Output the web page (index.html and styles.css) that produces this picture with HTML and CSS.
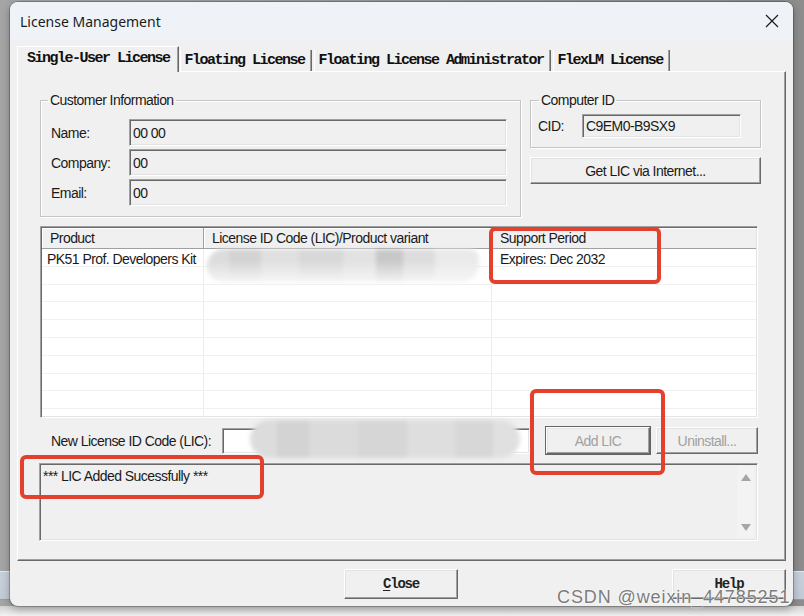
FILE: index.html
```html
<!DOCTYPE html>
<html lang="en">
<head>
    <meta charset="UTF-8">
    <meta name="viewport" content="width=device-width, initial-scale=1.0">
    <title>License Management</title>
    <link rel="stylesheet" href="styles.css">
</head>
<body>
    <div class="dialog">
        <div class="titlebar">
            <span class="title">License Management</span>
            <svg class="close-x" width="14" height="14" viewBox="0 0 14 14">
                <path d="M1 1L13 13M13 1L1 13" stroke="#1b1b1b" stroke-width="1.2" fill="none"/>
            </svg>
        </div>

        <div class="tabs">
            <div class="tab active">Single-User License</div>
            <div class="tab">Floating License</div>
            <div class="tab">Floating License Administrator</div>
            <div class="tab">FlexLM License</div>
        </div>

        <div class="panel">
            <div class="top">
                <fieldset class="group customer">
                    <legend>Customer Information</legend>
                    <div class="fields">
                        <label>Name:</label><div class="edit">00 00</div>
                        <label>Company:</label><div class="edit">00</div>
                        <label>Email:</label><div class="edit">00</div>
                    </div>
                </fieldset>
                <div class="side">
                    <fieldset class="group cid">
                        <legend>Computer ID</legend>
                        <div class="cid-row">
                            <label>CID:</label><div class="edit">C9EM0-B9SX9</div>
                        </div>
                    </fieldset>
                    <div class="btn wide">Get LIC via Internet...</div>
                </div>
            </div>

            <div class="listview">
                <div class="lv-head">
                    <div class="col c1">Product</div>
                    <div class="col c2">License ID Code (LIC)/Product variant</div>
                    <div class="col c3">Support Period</div>
                </div>
                <div class="lv-row">
                    <div class="col c1">PK51 Prof. Developers Kit</div>
                    <div class="col c2"></div>
                    <div class="col c3">Expires: Dec 2032</div>
                </div>
                <div class="lv-row"><div class="col c1"></div><div class="col c2"></div><div class="col c3"></div></div>
                <div class="lv-row"><div class="col c1"></div><div class="col c2"></div><div class="col c3"></div></div>
                <div class="lv-row"><div class="col c1"></div><div class="col c2"></div><div class="col c3"></div></div>
                <div class="lv-row"><div class="col c1"></div><div class="col c2"></div><div class="col c3"></div></div>
                <div class="lv-row"><div class="col c1"></div><div class="col c2"></div><div class="col c3"></div></div>
                <div class="lv-row"><div class="col c1"></div><div class="col c2"></div><div class="col c3"></div></div>
                <div class="lv-row"><div class="col c1"></div><div class="col c2"></div><div class="col c3"></div></div>
                <div class="lv-row"><div class="col c1"></div><div class="col c2"></div><div class="col c3"></div></div>
                <div class="lv-row"><div class="col c1"></div><div class="col c2"></div><div class="col c3"></div></div>
            </div>

            <div class="lic-row">
                <label class="lic-label">New License ID Code (LIC):</label>
                <div class="edit white lic-input"></div>
                <div class="btn default disabled add">Add LIC</div>
                <div class="btn disabled uninstall">Uninstall...</div>
            </div>

            <div class="output">
                <div class="output-text">*** LIC Added Sucessfully ***</div>
                <div class="vscroll">
                    <span class="arrow up"></span>
                    <span class="arrow down"></span>
                </div>
            </div>
        </div>

        <div class="footer">
            <div class="btn mono"><u>C</u>lose</div>
            <div class="btn mono">Help</div>
        </div>
    </div>

    <!-- redactions and annotations drawn over the screenshot -->
    <div class="smear smear-list"></div>
    <div class="smear smear-input"></div>
    <div class="mark mark-period"></div>
    <div class="mark mark-add"></div>
    <div class="mark mark-msg"></div>
    <div class="watermark">CSDN @weixin_44785251</div>
</body>
</html>
```

FILE: styles.css
```css
html, body {
    margin: 0;
}
body {
    width: 804px;
    height: 616px;
    padding-top: 2px;
    box-sizing: border-box;
    overflow: hidden;
    background:
        linear-gradient(transparent 606px, #d2d2d2 606px, #f2f2f2 616px),
        linear-gradient(transparent 571px, #e9e9e9 571px, #e9e9e9 572px, #c8d0dc 572px, #c2cad6 599px, #9c9c9c 599px, #9c9c9c 600px, transparent 600px),
        linear-gradient(90deg, #a5a5a5, #8d8d8d);
    font-family: 'Liberation Sans', Arial, sans-serif;
    font-size: 14px;
    letter-spacing: -0.55px;
    color: #1a1a1a;
    position: relative;
}

.dialog {
    width: 783px;
    height: 604px;
    margin-left: 10px;
    background-color: #f0f0f0;
    border-radius: 8px;
    overflow: hidden;
    box-shadow: 0 0 0 1px rgba(0, 0, 0, 0.22), 0 3px 8px rgba(0, 0, 0, 0.3);
    display: flex;
    flex-direction: column;
}

.titlebar {
    height: 38px;
    flex: none;
    background-color: #eff3f8;
    display: flex;
    align-items: center;
    justify-content: space-between;
    padding: 0 14px 0 10px;
    font-family: 'Noto Sans', 'Open Sans', sans-serif;
    font-size: 14px;
    letter-spacing: 0;
    color: #1b1b1b;
}

/* tab strip */
.tabs {
    display: flex;
    align-items: flex-end;
    height: 25px;
    margin: 6px 7px 0;
    flex: none;
}
.tab {
    font-family: 'Liberation Mono', monospace;
    font-weight: bold;
    font-size: 15px;
    letter-spacing: -1.5px;
    height: 21px;
    line-height: 22px;
    padding: 0 6px 0 4px;
    margin-left: 2px;
    border-left: 1px solid #fff;
    border-right: 1px solid #696969;
    box-shadow: inset -1px 0 #a0a0a0;
    color: #111;
    white-space: nowrap;
}
.tab.active {
    height: 25px;
    line-height: 24px;
    margin-left: 0;
    margin-bottom: -1px;
    padding: 0 8px 0 9px;
    border-top: 1px solid #fff;
    background-color: #f0f0f0;
    position: relative;
    z-index: 1;
}
.tab.active + .tab {
    margin-left: 1px;
}

.panel {
    height: 490px;
    margin: 0 7px;
    flex: none;
    box-sizing: border-box;
    padding: 20px 24px 0 22px;
    border-top: 1px solid #fff;
    border-left: 1px solid #fff;
    border-right: 1px solid #696969;
    border-bottom: 1px solid #696969;
    box-shadow: inset -1px -1px #a0a0a0;
}

.top {
    display: flex;
    gap: 9px;
}

.group {
    margin: 0;
    border: 1px solid #c4c4c4;
    box-shadow: inset 1px 1px #fff, 1px 1px #fff;
    box-sizing: border-box;
    min-width: 0;
}
.group legend {
    padding: 0 2px;
    line-height: 16px;
}

.customer {
    width: 481px;
    padding: 11px 13px 10px 10px;
}
.customer legend {
    margin-left: -3px;
}
.fields {
    display: grid;
    grid-template-columns: 78px 1fr;
    grid-auto-rows: 27px;
    row-gap: 3px;
    align-items: center;
}

.side {
    width: 231px;
}
.cid {
    padding: 6px 19px 9px 7px;
}
.cid legend {
    margin-left: 1px;
}
.cid-row {
    display: flex;
    align-items: center;
}
.cid-row label {
    width: 44px;
}
.cid-row .edit {
    flex: 1;
    height: 24px;
}

/* sunken edit box */
.edit {
    height: 27px;
    box-sizing: border-box;
    border-top: 1px solid #a0a0a0;
    border-left: 1px solid #a0a0a0;
    border-right: 1px solid #fff;
    border-bottom: 1px solid #fff;
    box-shadow: inset 1px 1px #696969, inset -1px -1px #e3e3e3;
    padding: 0 3px;
    display: flex;
    align-items: center;
    background-color: #f0f0f0;
}
.edit.white {
    background-color: #fff;
}

/* raised button */
.btn {
    box-sizing: border-box;
    height: 27px;
    border-top: 1px solid #fff;
    border-left: 1px solid #fff;
    border-right: 1px solid #696969;
    border-bottom: 1px solid #696969;
    box-shadow: inset -1px -1px #a0a0a0, inset 1px 1px #e3e3e3;
    background-color: #f0f0f0;
    display: flex;
    align-items: center;
    justify-content: center;
    white-space: nowrap;
}
.btn.wide {
    margin-top: 9px;
    width: 100%;
}
.btn.disabled {
    color: #a0a0a0;
}
.btn.default {
    outline: 1px solid #646464;
    outline-offset: 0;
}
.btn.mono {
    font-family: 'Liberation Mono', monospace;
    font-weight: bold;
    font-size: 14px;
    letter-spacing: -1.2px;
    width: 114px;
    height: 30px;
    color: #222;
}
.btn.mono u {
    text-underline-offset: 2px;
}

/* list view */
.listview {
    margin-top: 9px;
    width: 718px;
    height: 192px;
    box-sizing: border-box;
    border-top: 1px solid #a0a0a0;
    border-left: 1px solid #a0a0a0;
    border-right: 1px solid #fff;
    border-bottom: 1px solid #fff;
    box-shadow: inset 1px 1px #696969, inset -1px -1px #e3e3e3;
    padding: 1px;
    background-color: #fff;
    overflow: hidden;
}
.lv-head {
    display: flex;
    height: 20px;
    background-color: #f0f0f0;
    border-bottom: 1px solid #a0a0a0;
}
.lv-head .col {
    padding-left: 8px;
    line-height: 21px;
    border-right: 1px solid #a0a0a0;
    box-shadow: inset 1px 1px #fff;
}
.lv-row {
    display: flex;
    height: 17.8px;
    box-sizing: border-box;
    border-bottom: 1px solid #f0f0f0;
}
.lv-row .col {
    padding-left: 5px;
    line-height: 21px;
    border-right: 1px solid #ececec;
}
.col {
    box-sizing: border-box;
    white-space: nowrap;
    overflow: hidden;
}
.c1 {
    width: 162px;
}
.c2 {
    width: 288px;
}
.c3 {
    flex: 1;
    border-right: none !important;
}
.lv-row .c3 {
    padding-left: 8px;
}

.lic-row {
    margin-top: 9px;
    display: flex;
    align-items: center;
    height: 27px;
}
.lic-label {
    width: 182px;
    padding-left: 11px;
    box-sizing: border-box;
    white-space: nowrap;
}
.lic-input {
    width: 308px;
    height: 26px;
}
.add {
    margin-left: 16px;
    width: 104px;
}
.uninstall {
    margin-left: 6px;
    width: 102px;
}

.output {
    margin-top: 9px;
    width: 719px;
    height: 78px;
    margin-left: -1px;
    box-sizing: border-box;
    border-top: 1px solid #a0a0a0;
    border-left: 1px solid #a0a0a0;
    border-right: 1px solid #fff;
    border-bottom: 1px solid #fff;
    box-shadow: inset 1px 1px #696969, inset -1px -1px #e3e3e3;
    display: flex;
}
.output-text {
    flex: 1;
    padding: 3px 0 0 3px;
    line-height: 18px;
}
.vscroll {
    width: 17px;
    margin: 2px 3px 2px 0;
    display: flex;
    flex-direction: column;
    justify-content: space-between;
    align-items: center;
    padding: 8px 0 7px;
    box-sizing: border-box;
    background-color: #f3f3f3;
}
.arrow {
    width: 0;
    height: 0;
    border-left: 5px solid transparent;
    border-right: 5px solid transparent;
}
.arrow.up {
    border-bottom: 7px solid #a6a6a6;
}
.arrow.down {
    border-top: 7px solid #a6a6a6;
}

.footer {
    margin-top: 8px;
    display: flex;
    justify-content: flex-end;
    gap: 214px;
    padding-right: 7px;
}

/* blurred redactions */
.smear {
    position: absolute;
    filter: blur(2px);
}
.smear-list {
    left: 207px;
    top: 249px;
    width: 272px;
    height: 33px;
    border-radius: 18px 10px 18px 16px;
    background:
        linear-gradient(180deg, rgba(255, 255, 255, 0) 35%, rgba(248, 248, 248, 0.9) 100%),
        linear-gradient(90deg, #dcdcdc 0 8%, #d3d3d3 8% 20%, #e0e0e0 20% 34%, #d8d8d8 34% 50%, #e2e2e2 50% 62%, #c8c8c8 62% 72%, #dddddd 72% 84%, #eaeaea 84%);
}
.smear-input {
    left: 250px;
    top: 420px;
    width: 270px;
    height: 38px;
    border-radius: 19px;
    background: linear-gradient(90deg, #dcdcdc 0 10%, #d3d3d3 10% 22%, #dbdbdb 22% 40%, #d6d6d6 40% 58%, #dedede 58% 76%, #d7d7d7 76% 90%, #e0e0e0 90%);
}

/* red annotation frames */
.mark {
    position: absolute;
    box-sizing: border-box;
    border: 4px solid #e4402e;
    border-radius: 6px;
}
.mark-period {
    left: 489px;
    top: 227px;
    width: 172px;
    height: 57px;
}
.mark-add {
    left: 530px;
    top: 389px;
    width: 135px;
    height: 86px;
}
.mark-msg {
    left: 20px;
    top: 455px;
    width: 244px;
    height: 44px;
}

.watermark {
    position: absolute;
    left: 557px;
    top: 587px;
    font-family: 'Liberation Sans', Arial, sans-serif;
    font-size: 18px;
    letter-spacing: 0.9px;
    color: #7c7c7c;
    text-shadow: 0 0 2px #fff, 0 0 1px #fff;
    white-space: nowrap;
}
```
